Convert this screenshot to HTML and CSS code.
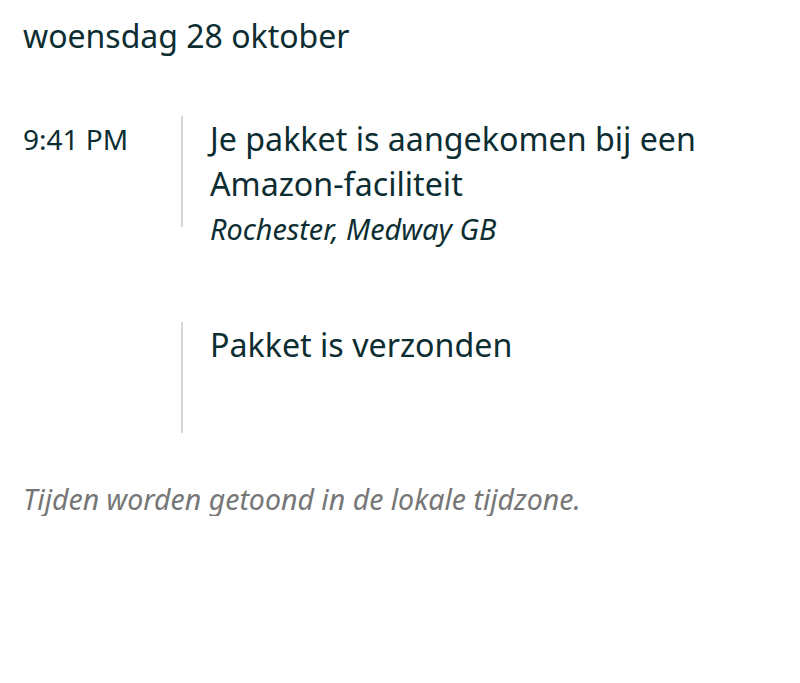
FILE: index.html
```html
<!DOCTYPE html>
<html lang="nl">
<head>
<meta charset="utf-8">
<link rel="stylesheet" href="styles.css">
</head>
<body>
<div class="page">
  <h2 class="date">woensdag 28 oktober</h2>
  <div class="events">
    <div class="event">
      <div class="time">9:41 PM</div>
      <div class="rail"></div>
      <div class="detail">
        <div class="title">Je pakket is aangekomen bij een Amazon-faciliteit</div>
        <div class="loc">Rochester, Medway GB</div>
      </div>
    </div>
    <div class="event">
      <div class="time"></div>
      <div class="rail"></div>
      <div class="detail">
        <div class="title">Pakket is verzonden</div>
      </div>
    </div>
  </div>
  <p class="note">Tijden worden getoond in de lokale tijdzone.</p>
</div>
</body>
</html>
```
FILE: styles.css
```css
html, body {
  margin: 0;
  padding: 0;
  background: #fff;
}
body {
  font-family: "Noto Sans", "Open Sans", sans-serif;
  color: #0c2d31;
}
.page {
  padding: 17px 23px 0 23px;
}
.date {
  margin: 0;
  font-size: 32px;
  font-weight: 400;
  line-height: 38px;
}
.events {
  margin-top: 61px;
  display: flex;
  flex-direction: column;
  gap: 70px;
}
.event {
  display: flex;
  align-items: flex-start;
}
.time {
  width: 158px;
  flex: none;
  font-size: 28px;
  line-height: 46px;
}
.rail {
  width: 2px;
  height: 111px;
  background: #d6d6d6;
  flex: none;
}
.detail {
  padding-left: 27px;
}
.title {
  font-size: 32.2px;
  line-height: 45px;
  max-width: 540px;
}
.loc {
  font-size: 28.8px;
  font-style: italic;
  line-height: 46px;
}
.note {
  margin: 49px 0 0 0;
  font-size: 28.5px;
  font-style: italic;
  color: #767676;
  line-height: 34px;
}
```
